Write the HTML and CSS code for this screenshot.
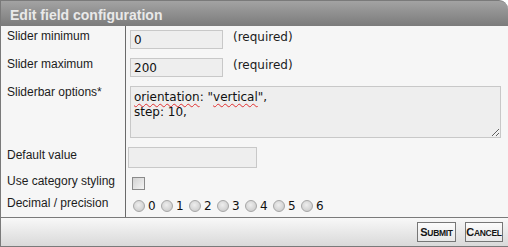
FILE: index.html
```html
<!DOCTYPE html>
<html lang="en">
<head>
    <meta charset="UTF-8">
    <title>Edit field configuration</title>
    <link rel="stylesheet" href="styles.css">
</head>
<body>
    <div class="dialog">
        <div class="dialog-title">Edit field configuration</div>

        <div class="dialog-body">
            <div class="row row-min">
                <div class="label">Slider minimum</div>
                <div class="field">
                    <input class="text short" type="text" value="0">
                    <span class="hint">(required)</span>
                </div>
            </div>
            <div class="row row-max">
                <div class="label">Slider maximum</div>
                <div class="field">
                    <input class="text short" type="text" value="200">
                    <span class="hint">(required)</span>
                </div>
            </div>
            <div class="row row-options">
                <div class="label">Sliderbar options*</div>
                <div class="field">
                    <div class="area"><span class="typo">orientation</span>: "<span class="typo">vertical</span>",<br>step: 10,</div>
                </div>
            </div>
            <div class="row row-default">
                <div class="label">Default value</div>
                <div class="field">
                    <input class="text medium" type="text" value="">
                </div>
            </div>
            <div class="row row-category">
                <div class="label">Use category styling</div>
                <div class="field">
                    <input class="check" type="checkbox">
                </div>
            </div>
            <div class="row row-decimal">
                <div class="label">Decimal / precision</div>
                <div class="field radios">
                    <label class="radio"><input type="radio" name="decimal"> 0</label>
                    <label class="radio"><input type="radio" name="decimal"> 1</label>
                    <label class="radio"><input type="radio" name="decimal"> 2</label>
                    <label class="radio"><input type="radio" name="decimal"> 3</label>
                    <label class="radio"><input type="radio" name="decimal"> 4</label>
                    <label class="radio"><input type="radio" name="decimal"> 5</label>
                    <label class="radio"><input type="radio" name="decimal"> 6</label>
                </div>
            </div>
        </div>

        <div class="dialog-footer">
            <button class="btn-submit" type="button"><span class="cap">S</span>ubmit</button>
            <button class="btn-cancel" type="button"><span class="cap">C</span>ancel</button>
        </div>
    </div>
</body>
</html>
```

FILE: styles.css
```css
body {
    margin: 0;
    background: #fff;
    font-family: "Liberation Sans", Arial, sans-serif;
    font-size: 12px;
    color: #1c1c1c;
}
.dialog {
    width: 508px;
    height: 247px;
    box-sizing: border-box;
    display: flex;
    flex-direction: column;
    overflow: hidden;
}
.dialog-title {
    height: 26px;
    box-sizing: border-box;
    padding: 2px 0 0 9px;
    line-height: 24px;
    font-size: 14px;
    font-weight: bold;
    color: #e9e9e9;
    background: linear-gradient(#a3a3a3, #7b7b7b);
    border-top: 1px solid #7a7a7a;
    border-left: 1px solid #7a7a7a;
    border-top-right-radius: 9px;
}
.dialog-body {
    background: #f6f6f6;
    border-left: 1px solid #7a7a7a;
}
.row {
    display: grid;
    grid-template-columns: 124px 1fr;
    box-sizing: border-box;
}
.label {
    padding: 2px 0 0 6px;
    line-height: 16px;
}
.field {
    border-left: 1px solid #6a6a6a;
    padding: 4px 0 0 4px;
    display: flex;
    align-items: flex-start;
}
.row-min, .row-max { height: 28px; }
.row-options { height: 63px; }
.row-default { height: 27px; }
.row-default .field { padding: 2px 0 0 2px; }
.row-category { height: 20px; }
.row-category .label { padding-top: 1px; }
.row-category .field { padding: 5px 0 0 6px; }
.row-decimal { height: 25px; }
.row-decimal .label { padding-top: 3px; }
.row-decimal .field { padding: 8px 0 0 7px; }

.text {
    margin: 0;
    box-sizing: border-box;
    background: #eeeeee;
    border: 1px solid #c8c8c8;
    padding: 1px 3px;
    font-family: "DejaVu Sans", Verdana, sans-serif;
    font-size: 12px;
    color: #111;
}
.short { width: 93px; height: 19px; }
.medium { width: 129px; height: 21px; }
.hint {
    margin-left: 10px;
    line-height: 14px;
    font-family: "DejaVu Sans", Verdana, sans-serif;
    font-size: 12px;
}
.area {
    width: 371px;
    height: 52px;
    box-sizing: border-box;
    background: #eeeeee;
    border: 1px solid #c8c8c8;
    padding: 3px 3px;
    font-family: "DejaVu Sans", Verdana, sans-serif;
    font-size: 12px;
    line-height: 15px;
    color: #111;
    overflow: auto;
    resize: both;
}
.typo {
    text-decoration: underline wavy #e03030;
    text-decoration-thickness: 1px;
    text-underline-offset: 2px;
}
.check {
    appearance: none;
    margin: 0;
    width: 13px;
    height: 13px;
    border: 1px solid #8a8a8a;
    background: linear-gradient(135deg, #d2d2d2, #f4f4f4);
}
.radios {
    font-family: "DejaVu Sans", Verdana, sans-serif;
    font-size: 12px;
    color: #111;
}
.radio {
    width: 28px;
    display: flex;
    align-items: center;
    gap: 3px;
    line-height: 12px;
}
.radio input {
    appearance: none;
    margin: 0;
    width: 12px;
    height: 12px;
    border-radius: 50%;
    border: 1px solid #a6a6a6;
    background: radial-gradient(circle at 45% 40%, #eeeeee, #c4c4c4);
}
.dialog-footer {
    flex: 1;
    border-top: 1px solid #7a7a7a;
    border-left: 1px solid #7a7a7a;
    border-bottom: 1px solid #7a7a7a;
    background: linear-gradient(#f8f8f8, #d9d9d9);
    display: flex;
    justify-content: flex-end;
    align-items: flex-start;
    gap: 9px;
    padding: 4px 5px 0 0;
}
button {
    height: 20px;
    padding: 0;
    border: 1px solid #767676;
    background: linear-gradient(#fbfbfb, #e8e8e8);
    font-family: "Liberation Sans", Arial, sans-serif;
    font-size: 8.5px;
    font-weight: bold;
    text-transform: uppercase;
    letter-spacing: -0.3px;
    color: #151515;
    white-space: nowrap;
}
.btn-submit { width: 39px; }
.btn-cancel { width: 38px; }
.cap {
    font-size: 11px;
}
```
